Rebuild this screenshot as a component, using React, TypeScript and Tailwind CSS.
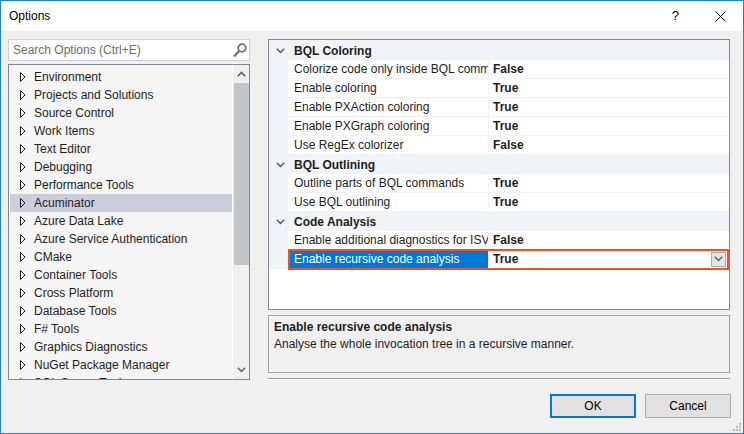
import React from "react";

const FONT = { fontFamily: '"Liberation Sans", Arial, sans-serif' };

const treeItems = [
  "Environment",
  "Projects and Solutions",
  "Source Control",
  "Work Items",
  "Text Editor",
  "Debugging",
  "Performance Tools",
  "Acuminator",
  "Azure Data Lake",
  "Azure Service Authentication",
  "CMake",
  "Container Tools",
  "Cross Platform",
  "Database Tools",
  "F# Tools",
  "Graphics Diagnostics",
  "NuGet Package Manager",
  "SQL Server Tools",
];

type Row =
  | { kind: "cat"; label: string }
  | { kind: "prop"; label: string; value: string; selected?: boolean };

const rows: Row[] = [
  { kind: "cat", label: "BQL Coloring" },
  { kind: "prop", label: "Colorize code only inside BQL commands", value: "False" },
  { kind: "prop", label: "Enable coloring", value: "True" },
  { kind: "prop", label: "Enable PXAction coloring", value: "True" },
  { kind: "prop", label: "Enable PXGraph coloring", value: "True" },
  { kind: "prop", label: "Use RegEx colorizer", value: "False" },
  { kind: "cat", label: "BQL Outlining" },
  { kind: "prop", label: "Outline parts of BQL commands", value: "True" },
  { kind: "prop", label: "Use BQL outlining", value: "True" },
  { kind: "cat", label: "Code Analysis" },
  { kind: "prop", label: "Enable additional diagnostics for ISV", value: "False" },
  { kind: "prop", label: "Enable recursive code analysis", value: "True", selected: true },
];

function Triangle() {
  return (
    <svg width="6" height="10" viewBox="0 0 6 10" className="shrink-0">
      <polygon points="0.5,0.5 5,5 0.5,9.5" fill="none" stroke="#1e1e1e" strokeWidth="1" />
    </svg>
  );
}

function ChevronDown({ color = "#444" }: { color?: string }) {
  return (
    <svg width="9" height="6" viewBox="0 0 9 6">
      <polyline points="0.8,0.8 4.5,4.5 8.2,0.8" fill="none" stroke={color} strokeWidth="1.4" />
    </svg>
  );
}

function ChevronUp({ color = "#444" }: { color?: string }) {
  return (
    <svg width="9" height="6" viewBox="0 0 9 6">
      <polyline points="0.8,5.2 4.5,1.5 8.2,5.2" fill="none" stroke={color} strokeWidth="1.6" />
    </svg>
  );
}

export default function App() {
  return (
    <div
      className="w-[744px] h-[434px] border border-[#1883d7] bg-[#f0f0f0] flex flex-col text-[12px] text-[#1e1e1e] overflow-hidden"
      style={FONT}
    >
      {/* Title bar */}
      <div className="h-[30px] bg-white flex items-center shrink-0">
        <span className="pl-[8px] text-[12px] text-black">Options</span>
        <div className="flex-1" />
        <span className="text-[13px] text-black mr-[36px]">?</span>
        <svg width="11" height="11" viewBox="0 0 11 11" className="mr-[17px]">
          <line x1="0.5" y1="0.5" x2="10.5" y2="10.5" stroke="#000" strokeWidth="1" />
          <line x1="10.5" y1="0.5" x2="0.5" y2="10.5" stroke="#000" strokeWidth="1" />
        </svg>
      </div>

      {/* Body */}
      <div className="flex-1 flex flex-col pt-[8px] relative">
        <div className="flex pl-[7px] gap-[18px]">
          {/* Left column */}
          <div className="w-[242px] flex flex-col gap-[3px]">
            <div className="h-[22px] bg-white border border-[#cccedb] flex items-center pl-[4px] pr-[2px]">
              <span className="flex-1 text-[#6d6d6d] text-[12px]">Search Options (Ctrl+E)</span>
              <svg width="14" height="15" viewBox="0 0 14 15">
                <circle cx="9" cy="5" r="3.8" fill="none" stroke="#717171" strokeWidth="1.8" />
                <line x1="6.3" y1="7.8" x2="1.2" y2="13.5" stroke="#717171" strokeWidth="2.4" />
              </svg>
            </div>
            <div className="h-[316px] bg-[#f5f5f5] border border-[#828790] flex overflow-hidden">
              <div className="flex-1 flex flex-col pt-[3px] pl-[1px] overflow-hidden">
                {treeItems.map((t) => (
                  <div
                    key={t}
                    className={`h-[18px] shrink-0 flex items-center pl-[10px] gap-[8px] ${
                      t === "Acuminator" ? "bg-[#cccedb]" : ""
                    }`}
                  >
                    <Triangle />
                    <span className="whitespace-nowrap">{t}</span>
                  </div>
                ))}
              </div>
              <div className="w-[17px] bg-[#f0f0f0] border-l border-white flex flex-col items-center">
                <div className="h-[18px] flex items-center justify-center">
                  <ChevronUp color="#606060" />
                </div>
                <div className="w-[15px] h-[182px] bg-[#c2c3c9]" />
                <div className="flex-1" />
                <div className="h-[18px] flex items-center justify-center">
                  <ChevronDown color="#606060" />
                </div>
              </div>
            </div>
          </div>

          {/* Right column */}
          <div className="w-[462px] flex flex-col">
            <div className="h-[271px] bg-white border border-[#828790] flex flex-col overflow-hidden">
              <div className="h-[1px] shrink-0 bg-[#f0f3f8]" />
              {rows.map((r, i) =>
                r.kind === "cat" ? (
                  <div key={i} className="h-[19px] shrink-0 bg-[#f0f3f8] flex items-center">
                    <div className="w-[19px] flex items-center justify-center pl-[4px]">
                      <ChevronDown color="#555" />
                    </div>
                    <span className="pl-[6px] font-bold">{r.label}</span>
                  </div>
                ) : (
                  <div key={i} className="h-[19px] shrink-0 flex bg-[#f0f3f8]">
                    <div className="w-[19px] shrink-0" />
                    <div className="flex-1 flex relative mb-[1px]">
                      <div
                        className={`w-[200px] shrink-0 flex items-center pl-[6px] overflow-hidden whitespace-nowrap mr-[1px] ${
                          r.selected ? "bg-[#0078d7] text-white" : "bg-white"
                        }`}
                      >
                        {r.label}
                      </div>
                      <div className="flex-1 bg-white flex items-center pl-[4px] font-bold">
                        <span className="flex-1">{r.value}</span>
                        {r.selected && (
                          <div className="w-[15px] h-[15px] mr-[3px] bg-[#e5e5e5] border border-[#acacac] flex items-center justify-center">
                            <ChevronDown color="#606060" />
                          </div>
                        )}
                      </div>
                      {r.selected && (
                        <div className="absolute left-0 right-0 -top-[1px] -bottom-[2px] border-2 border-[#f4511e]" />
                      )}
                    </div>
                  </div>
                )
              )}
              <div className="flex-1 bg-white" />
            </div>

            <div className="h-[58px] mt-[5px] bg-[#f0f0f0] border border-[#a0a0a0] flex flex-col pl-[5px] pt-[3px]">
              <span className="font-bold leading-[17px]">Enable recursive code analysis</span>
              <span className="leading-[17px]">Analyse the whole invocation tree in a recursive manner.</span>
            </div>

            <div className="mt-[5px] h-[1px] bg-[#a0a0a0]" />
            <div className="h-[1px] bg-white" />
          </div>
        </div>

        {/* Buttons */}
        <div className="flex justify-end gap-[9px] pr-[12px] mt-[14px]">
          <div className="w-[86px] h-[24px] bg-[#e1e1e1] border-2 border-[#0078d7] flex items-center justify-center text-black">
            OK
          </div>
          <div className="w-[86px] h-[24px] bg-[#e1e1e1] border border-[#adadad] flex items-center justify-center text-black">
            Cancel
          </div>
        </div>

        {/* resize grip */}
        <svg width="10" height="10" viewBox="0 0 10 10" className="absolute right-[1px] bottom-[1px]">
          <rect x="7" y="1" width="2" height="2" fill="#b8b8b8" />
          <rect x="4" y="4" width="2" height="2" fill="#b8b8b8" />
          <rect x="7" y="4" width="2" height="2" fill="#b8b8b8" />
          <rect x="1" y="7" width="2" height="2" fill="#b8b8b8" />
          <rect x="4" y="7" width="2" height="2" fill="#b8b8b8" />
          <rect x="7" y="7" width="2" height="2" fill="#b8b8b8" />
        </svg>
      </div>
    </div>
  );
}
